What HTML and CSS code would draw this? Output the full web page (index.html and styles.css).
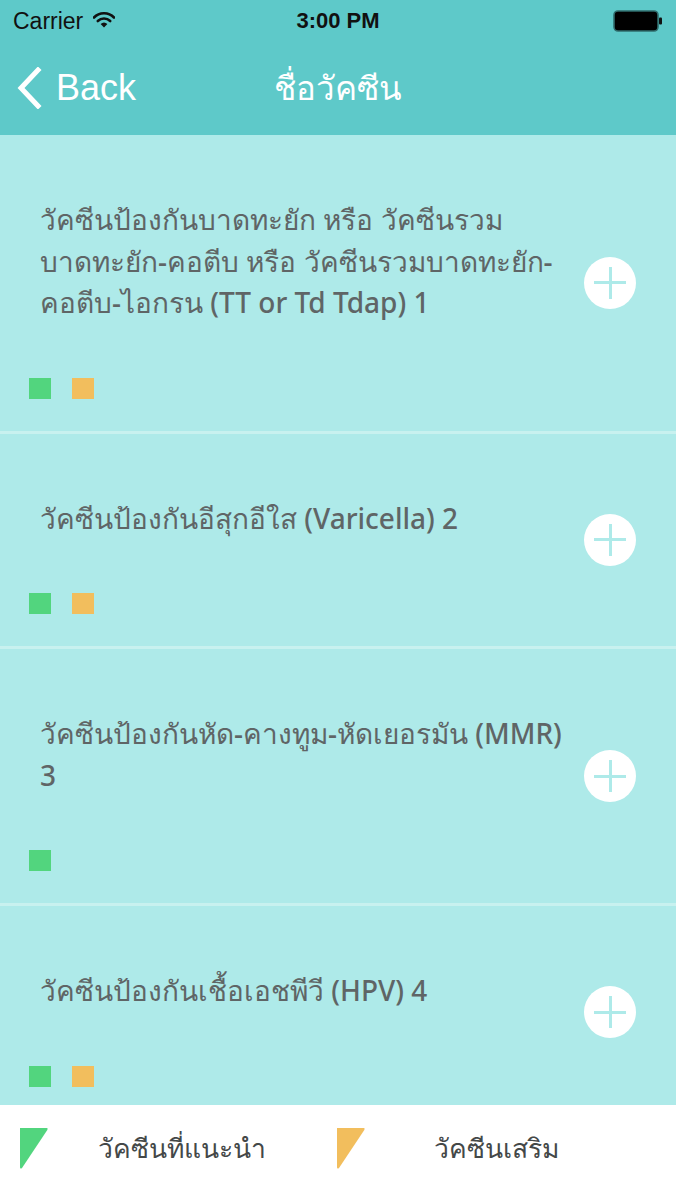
FILE: index.html
```html
<!DOCTYPE html>
<html lang="th">
<head>
<meta charset="utf-8">
<title>ชื่อวัคซีน</title>
<link rel="stylesheet" href="styles.css">
</head>
<body>
<div class="screen">
  <header class="top">
    <div class="status">
      <div class="status-left">
        <span class="carrier">Carrier</span>
        <svg class="wifi" width="22" height="16" viewBox="0 0 22 16">
          <path d="M1 5.5 A14 14 0 0 1 21 5.5" fill="none" stroke="#111" stroke-width="2.6" stroke-linecap="round"/>
          <path d="M4.8 9 A9 9 0 0 1 17.2 9" fill="none" stroke="#111" stroke-width="2.6" stroke-linecap="round"/>
          <path d="M11 15.5 L7.6 12 A5 5 0 0 1 14.4 12 Z" fill="#111"/>
        </svg>
      </div>
      <div class="time">3:00 PM</div>
      <div class="status-right">
        <svg class="battery" width="50" height="22" viewBox="0 0 50 22">
          <rect x="1" y="1" width="44" height="20" rx="4" fill="#000" stroke="#2f6c6c" stroke-width="1.6"/>
          <rect x="46" y="7.5" width="3" height="7" rx="1" fill="#111"/>
        </svg>
      </div>
    </div>
    <nav class="navbar">
      <div class="back">
        <svg class="chevron" width="26" height="42" viewBox="0 0 26 42">
          <path d="M22 3 L5 21 L22 39" fill="none" stroke="#fff" stroke-width="5" stroke-linecap="square"/>
        </svg>
        <span>Back</span>
      </div>
      <div class="title">ชื่อวัคซีน</div>
    </nav>
  </header>

  <main class="list">
    <section class="card">
      <div class="card-body">
        <p class="name">วัคซีนป้องกันบาดทะยัก หรือ วัคซีนรวม บาดทะยัก-คอตีบ หรือ วัคซีนรวมบาดทะยัก-คอตีบ-ไอกรน (TT or Td Tdap) 1</p>
        <div class="tags"><i class="tag green"></i><i class="tag orange"></i></div>
      </div>
      <button class="add" aria-label="add"><span class="plus"></span></button>
    </section>
    <section class="card">
      <div class="card-body">
        <p class="name">วัคซีนป้องกันอีสุกอีใส (Varicella) 2</p>
        <div class="tags"><i class="tag green"></i><i class="tag orange"></i></div>
      </div>
      <button class="add" aria-label="add"><span class="plus"></span></button>
    </section>
    <section class="card">
      <div class="card-body">
        <p class="name">วัคซีนป้องกันหัด-คางทูม-หัดเยอรมัน (MMR) 3</p>
        <div class="tags"><i class="tag green"></i></div>
      </div>
      <button class="add" aria-label="add"><span class="plus"></span></button>
    </section>
    <section class="card">
      <div class="card-body">
        <p class="name">วัคซีนป้องกันเชื้อเอชพีวี (HPV) 4</p>
        <div class="tags"><i class="tag green"></i><i class="tag orange"></i></div>
      </div>
      <button class="add" aria-label="add"><span class="plus"></span></button>
    </section>
  </main>

  <footer class="legend">
    <div class="legend-item first">
      <svg class="flag" width="28" height="41" viewBox="0 0 28 41"><path d="M0 0 H27 Q28 0 27.3 2 L2 40 Q0 41.5 0 39 Z" fill="#52d57e"/></svg>
      <span>วัคซีนที่แนะนำ</span>
    </div>
    <div class="legend-item second">
      <svg class="flag" width="28" height="41" viewBox="0 0 28 41"><path d="M0 0 H27 Q28 0 27.3 2 L2 40 Q0 41.5 0 39 Z" fill="#f2be5d"/></svg>
      <span>วัคซีนเสริม</span>
    </div>
  </footer>
</div>
</body>
</html>
```

FILE: styles.css
```css
* { box-sizing: border-box; }
html, body { margin: 0; padding: 0; }
body {
  font-family: "Noto Sans", "DejaVu Sans", sans-serif;
  background: #ffffff;
}
.screen {
  width: 676px;
  height: 1200px;
  display: flex;
  flex-direction: column;
  overflow: hidden;
}
.top {
  background: #5ec9c9;
  height: 135px;
  flex: none;
}
.status {
  height: 42px;
  display: grid;
  grid-template-columns: 1fr auto 1fr;
  align-items: center;
  padding: 0 13px;
  font-family: "Liberation Sans", Arial, sans-serif;
  color: #111;
}
.status-left { display: flex; align-items: center; gap: 10px; }
.carrier { font-size: 23px; }
.wifi { margin-top: -2px; }
.time { font-size: 22px; font-weight: bold; }
.status-right { display: flex; justify-content: flex-end; }
.navbar {
  height: 93px;
  display: flex;
  align-items: center;
  position: relative;
  color: #fff;
  padding-bottom: 2px;
}
.back {
  display: flex;
  align-items: center;
  gap: 14px;
  padding-left: 16px;
  font-family: "Liberation Sans", Arial, sans-serif;
  font-size: 36px;
}
.title {
  position: absolute;
  left: 0;
  right: 0;
  top: 0;
  bottom: 0;
  display: flex;
  align-items: center;
  justify-content: center;
  font-size: 33px;
  pointer-events: none;
}
.list {
  flex: 1;
  overflow: hidden;
  background: #c8f1ef;
  display: flex;
  flex-direction: column;
  gap: 3px;
}
.card {
  flex: none;
  background: #aeeae9;
  display: flex;
  align-items: center;
  padding: 0 40px 0 29px;
}
.card-body {
  flex: 1;
  padding: 64px 0 32px;
  display: flex;
  flex-direction: column;
  gap: 54px;
}
.name {
  margin: 0;
  padding-left: 11px;
  padding-right: 4px;
  font-size: 28px;
  font-weight: 500;
  line-height: 41.5px;
  color: #5f6566;
}
.tags { display: flex; gap: 21px; }
.tag {
  display: block;
  width: 22px;
  height: 21px;
}
.tag.green { background: #52d57e; }
.tag.orange { background: #f2be5d; }
.add {
  flex: none;
  width: 52px;
  height: 52px;
  border-radius: 50%;
  border: 0;
  padding: 0;
  background: #ffffff;
  display: flex;
  align-items: center;
  justify-content: center;
}
.plus {
  position: relative;
  width: 32px;
  height: 32px;
  display: block;
}
.plus::before, .plus::after {
  content: "";
  position: absolute;
  background: #aeeae9;
}
.plus::before { left: 0; right: 0; top: 14.5px; height: 3px; }
.plus::after { top: 0; bottom: 0; left: 14.5px; width: 3px; }
.legend {
  height: 95px;
  flex: none;
  background: #ffffff;
  display: flex;
  align-items: flex-start;
  padding: 21px 0 0 20px;
}
.legend-item {
  display: flex;
  align-items: center;
  font-size: 26.5px;
  color: #444848;
}
.legend-item span { margin-top: 2px; }
.legend-item.first { width: 317px; gap: 50px; }
.legend-item.second { gap: 69px; }
```
